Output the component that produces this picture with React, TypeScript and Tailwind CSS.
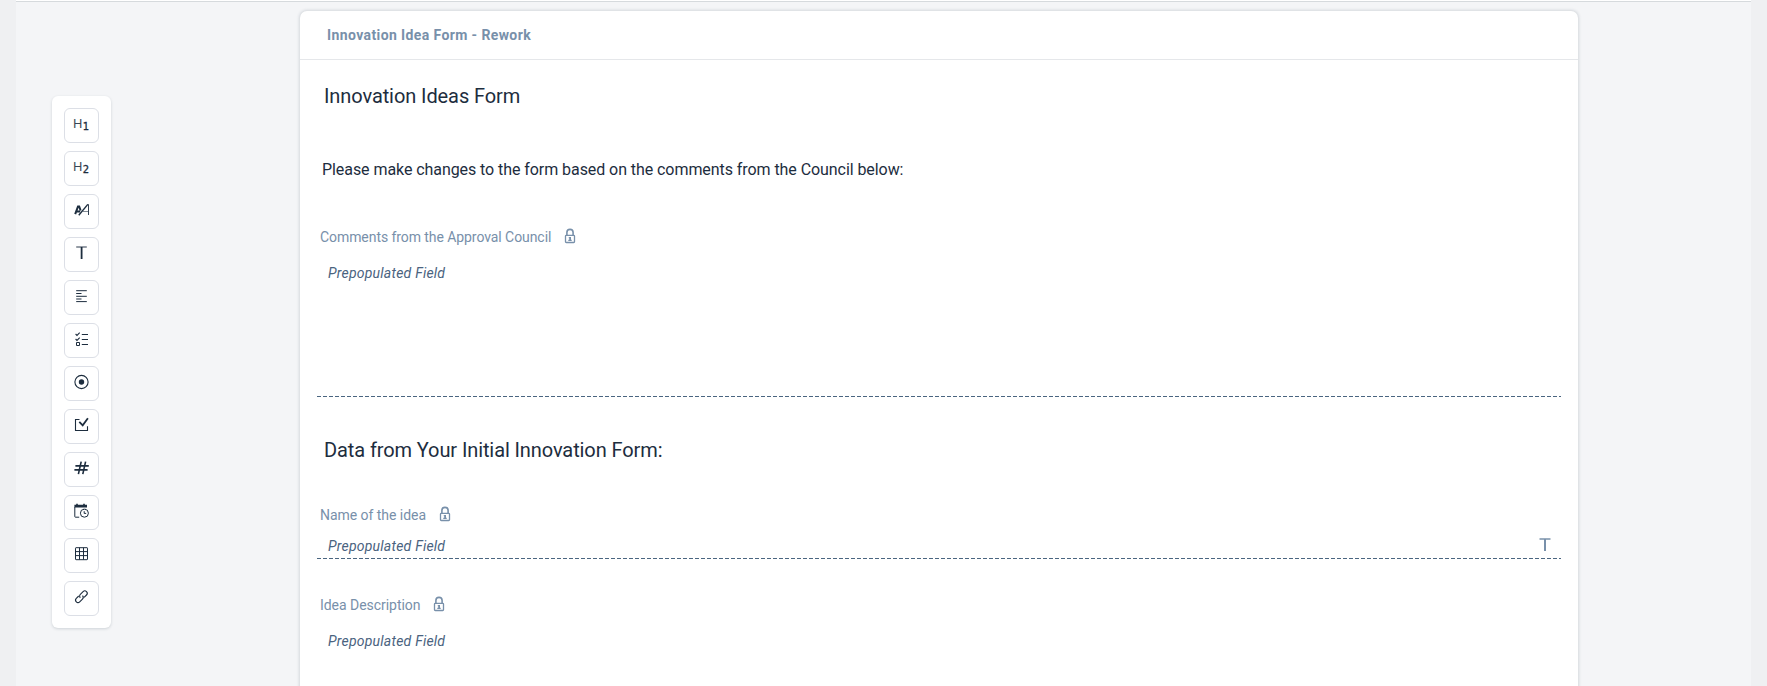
import type { ReactNode } from "react";

const INK = "#1d2d3e";

function Tool({ label, children }: { label: string; children: ReactNode }) {
  return (
    <button
      aria-label={label}
      className="flex h-[35px] w-[35px] shrink-0 items-center justify-center rounded-[6px] border border-[#dcdfe6] bg-white"
    >
      <svg width="33" height="33" viewBox="0 0 33 33" fill="none" stroke={INK} strokeWidth="1">
        {children}
      </svg>
    </button>
  );
}

function Heading({ level }: { level: string }) {
  return (
    <g stroke="none" fill={INK}>
      <text x="7.9" y="19.3" fontSize="13.2" fillOpacity="0.88" className="font-[Roboto,sans-serif]">H</text>
      <text x="17.8" y="21.3" fontSize="10" strokeWidth="0.3" stroke={INK} className="font-['DejaVu_Sans',sans-serif]">{level}</text>
    </g>
  );
}

function Toolbar() {
  return (
    <aside className="mt-[94px] ml-9 flex h-[532px] w-[59px] shrink-0 flex-col items-center gap-2 rounded-[6px] bg-white py-3 shadow-[0_1px_3px_rgba(34,53,72,0.18)]">
      <Tool label="Heading 1"><Heading level="1" /></Tool>
      <Tool label="Heading 2"><Heading level="2" /></Tool>
      <Tool label="Paragraph">
        <path d="M10.2 19.2 13 11.5h1.2l1.4 4M11.6 16.5h3.6" strokeWidth="2" />
        <path d="M13.8 20.2 22.6 9.6" strokeWidth="1.4" />
        <path d="M22.2 9.5h1.3V20" strokeWidth="0.9" />
        <path d="M17.8 16.5h5.4" strokeWidth="0.8" strokeOpacity="0.7" />
      </Tool>
      <Tool label="Text">
        <path d="M11.2 9h10.6" strokeWidth="1.1" strokeOpacity="0.85" />
        <path d="M16.6 9v12" strokeWidth="1.8" />
      </Tool>
      <Tool label="Text area">
        <path d="M11.2 9.7h10.6M11.2 12.5h5.3M11.2 15.3h10.6M11.2 18h5.3M11.2 20.6h10.6" />
      </Tool>
      <Tool label="Choice list">
        <path d="M10.6 10l1.4 1.4 2.7-2.8M10.6 15l1.4 1.4 2.7-2.8" strokeWidth="1.1" />
        <path d="M11.5 18.5h3v3h-3z" />
        <path d="M16.8 10.5H23M16.8 15.5H23M16.8 20.5H23" />
      </Tool>
      <Tool label="Radio">
        <circle cx="16.5" cy="15" r="6.6" strokeWidth="1.1" />
        <circle cx="16.5" cy="15" r="2.7" fill={INK} stroke="none" />
      </Tool>
      <Tool label="Checkbox">
        <path d="M14.5 9.5H10.5v11h12V16.3" strokeWidth="1.1" />
        <path d="M14.3 11.8l3.4 3.6 5.2-7.1" strokeWidth="1.8" />
      </Tool>
      <Tool label="Number">
        <path d="M10.4 12.9h13.4M9.4 16.9h13.2M16.2 8.7 13.4 21.2M20.6 8.7l-2.8 12.5" strokeWidth="1.6" />
      </Tool>
      <Tool label="Date and time">
        <path d="M9.4 8.7h1.8V7.8h1.6v.9h5.4v-.9h1.6v.9H22v2.9H9.4z" fill={INK} stroke="none" />
        <path d="M9.8 11v9.6q0 .6.6.6h3.8" />
        <circle cx="19.4" cy="17.2" r="4" />
        <path d="M19.2 15.2v2.2h2" />
      </Tool>
      <Tool label="Table">
        <rect x="10.5" y="8.7" width="12" height="12" rx="0.5" />
        <path d="M14.5 8.7v12M18.5 8.7v12M10.5 12.6h12M10.5 16.6h12" />
      </Tool>
      <Tool label="Link">
        <g transform="translate(16.4 14.7) rotate(-45)" strokeWidth="1.1">
          <path d="M1.4 2.4h3.4a2.4 2.4 0 0 0 0-4.8H.9A2.4 2.4 0 0 0-1.5 0" />
          <path d="M-1.4-2.4h-3.4a2.4 2.4 0 0 0 0 4.8h3.9A2.4 2.4 0 0 0 1.5 0" />
        </g>
      </Tool>
    </aside>
  );
}

function Lock() {
  return (
    <svg width="12" height="16" viewBox="0 0 12 16" fill="none" stroke="#7890aa" strokeWidth="1.3">
      <rect x="1.5" y="7.3" width="9" height="7.2" rx="0.8" />
      <path d="M2.9 7.2V4.5a3.1 3.1 0 0 1 6.2 0v2.7" strokeWidth="1.6" />
      <path d="M6.1 9v3.6" strokeWidth="1.8" />
      <path d="M4.3 12.4h3.4M4.7 9.7h1.8" strokeWidth="1.1" />
    </svg>
  );
}

function Label({ text, spacing }: { text: string; spacing: string }) {
  return (
    <div className="flex h-5 items-center pl-[3px] text-[14px] leading-5 text-[#7890aa]">
      <span className={`whitespace-nowrap ${spacing}`}>{text}</span>
      <span className="-mt-[3px] ml-[12.5px]"><Lock /></span>
    </div>
  );
}

function Prepopulated() {
  return <p className="pl-[11px] text-[14px] leading-5 tracking-[0.23px] text-[#4a6380] italic">Prepopulated Field</p>;
}

function DashedRule() {
  return <div className="h-px w-full bg-[repeating-linear-gradient(90deg,#4a6580_0px,#4a6580_4px,transparent_4px,transparent_6px)]" />;
}

export default function App() {
  return (
    <div className="flex h-[686px] w-[1767px] overflow-hidden bg-[#eff0f2] px-4 font-[Roboto,sans-serif] text-[#1d2d3e]">
      <main className="flex h-full w-[1735px] flex-col border-t border-white bg-[#f4f5f7]">
        <div className="h-px shrink-0 bg-[#d6dadd]" />
        <div className="flex">
          <Toolbar />
          <section className="mt-[9px] ml-[189px] h-[720px] w-[1278px] shrink-0 rounded-t-[7px] bg-white shadow-[0_0_3px_1px_rgba(34,53,72,0.15)]">
            <header className="h-[49px] border-b border-[#e5e7ea] pt-[14px] pl-[27px] text-[14px] leading-5 font-bold text-[#7890aa]">
              <span className="tracking-[0.39px]">Innovation Idea Form - Rework</span>
            </header>
            <div className="flex w-[1261px] flex-col pl-[17px]">
              <h1 className="mt-[22px] pl-[7px] text-[20px] leading-7 tracking-[-0.09px]">Innovation Ideas Form</h1>
              <p className="mt-[48px] pl-[5px] text-[16px] leading-6 tracking-[-0.067px]">
                Please make changes to the form based on the comments from the Council below:
              </p>
              <div className="mt-[45px]"><Label text="Comments from the Approval Council" spacing="tracking-[-0.07px]" /></div>
              <div className="mt-4 h-[133px]"><Prepopulated /></div>
              <DashedRule />
              <h2 className="mt-[39px] pl-[7px] text-[20px] leading-7 tracking-[-0.1px]">Data from Your Initial Innovation Form:</h2>
              <div className="mt-[41px]"><Label text="Name of the idea" spacing="tracking-[-0.04px]" /></div>
              <div className="mt-[11px] flex h-[22px] items-start justify-between pr-[10px]">
                <Prepopulated />
                <svg width="12" height="15" viewBox="0 0 12 15" fill="none" stroke="#7890aa">
                  <path d="M.5 3h11" strokeWidth="1.5" />
                  <path d="M6 3v12" strokeWidth="2" />
                </svg>
              </div>
              <DashedRule />
              <div className="mt-9"><Label text="Idea Description" spacing="tracking-[-0.04px]" /></div>
              <div className="mt-4"><Prepopulated /></div>
            </div>
          </section>
        </div>
      </main>
    </div>
  );
}
